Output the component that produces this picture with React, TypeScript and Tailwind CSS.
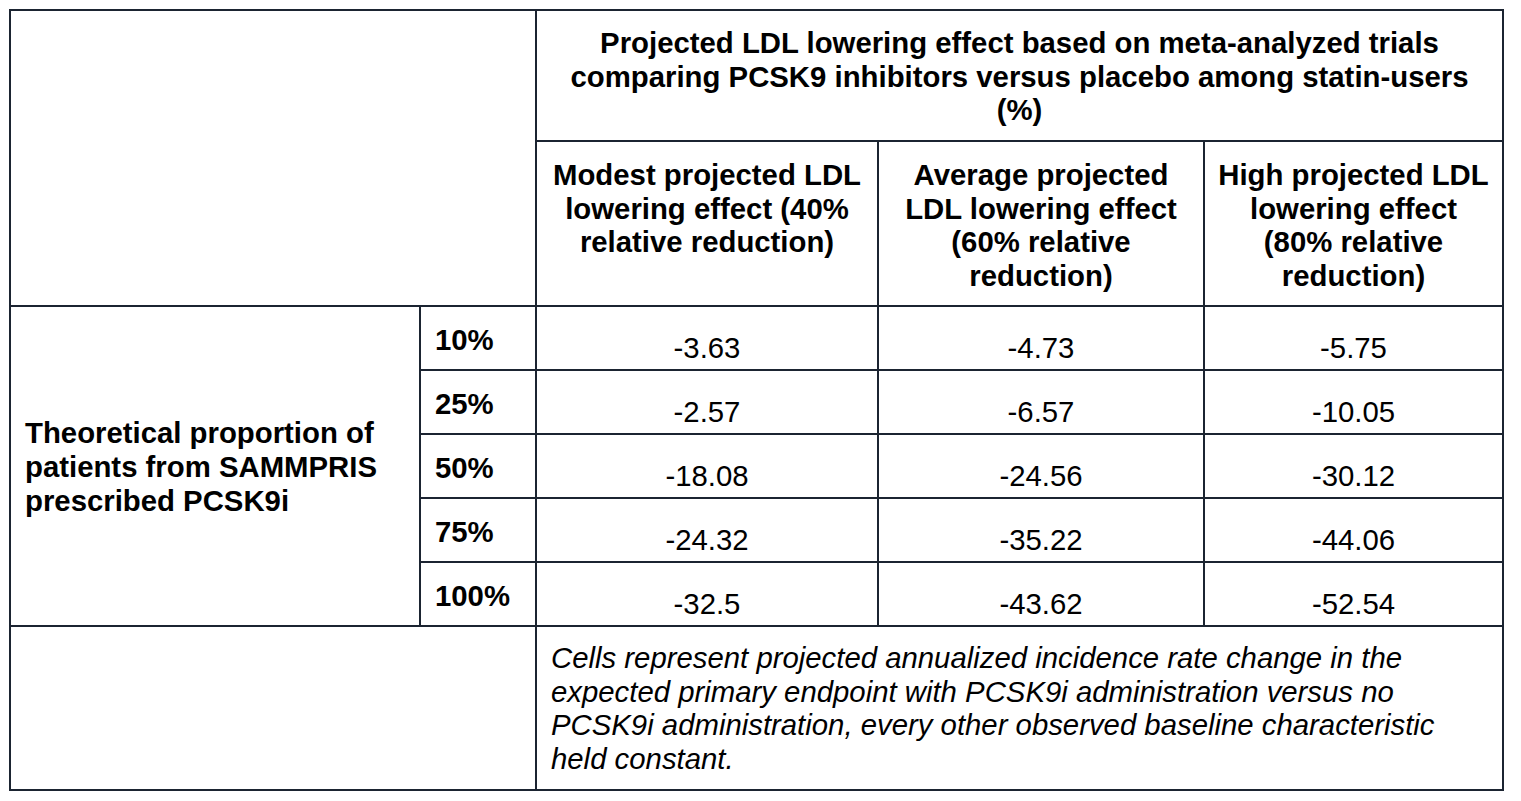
const cell = 'border-r-2 border-b-2 border-[#1b2431]';

const rows = [
  { pct: '10%', values: ['-3.63', '-4.73', '-5.75'] },
  { pct: '25%', values: ['-2.57', '-6.57', '-10.05'] },
  { pct: '50%', values: ['-18.08', '-24.56', '-30.12'] },
  { pct: '75%', values: ['-24.32', '-35.22', '-44.06'] },
  { pct: '100%', values: ['-32.5', '-43.62', '-52.54'] },
];

const subHeaders = [
  'Modest projected LDL lowering effect (40% relative reduction)',
  'Average projected LDL lowering effect (60% relative reduction)',
  'High projected LDL lowering effect (80% relative reduction)',
];

export default function App() {
  return (
    <div className="min-h-screen bg-white pl-[9px] pt-[9px] font-['Liberation_Sans',Arial,sans-serif] text-[29.33px] leading-[1.15] text-black">
      <div className="grid w-fit grid-cols-[410px_116px_342px_326px_299px] grid-rows-[131px_165px_64px_64px_64px_64px_64px_164px] border-l-2 border-t-2 border-[#1b2431]">
        {/* top-left blank */}
        <div className={`${cell} col-span-2 row-span-2`} />

        {/* main header */}
        <div className={`${cell} col-span-3 px-3 pt-[15px] text-center font-bold`}>
          Projected LDL lowering effect based on meta-analyzed trials comparing PCSK9 inhibitors versus placebo among statin-users (%)
        </div>

        {/* sub headers */}
        {subHeaders.map((h) => (
          <div key={h} className={`${cell} px-3 pt-[16px] text-center font-bold`}>
            {h}
          </div>
        ))}

        {/* row label */}
        <div className={`${cell} col-start-1 row-span-5 row-start-3 flex items-center px-[14px] pt-[2px] font-bold`}>
          Theoretical proportion of patients from SAMMPRIS prescribed PCSK9i
        </div>

        {rows.map((r) => (
          <div key={r.pct} className="contents">
            <div className={`${cell} col-start-2 px-[14px] pt-[16px] font-bold`}>{r.pct}</div>
            {r.values.map((v, i) => (
              <div key={i} className={`${cell} pt-[24px] text-center`}>
                {v}
              </div>
            ))}
          </div>
        ))}

        {/* footer */}
        <div className={`${cell} col-span-2`} />
        <div className={`${cell} col-span-3 px-[14px] pt-[14px] italic`}>
          Cells represent projected annualized incidence rate change in the expected primary endpoint with PCSK9i administration versus no PCSK9i administration, every other observed baseline characteristic held constant.
        </div>
      </div>
    </div>
  );
}
